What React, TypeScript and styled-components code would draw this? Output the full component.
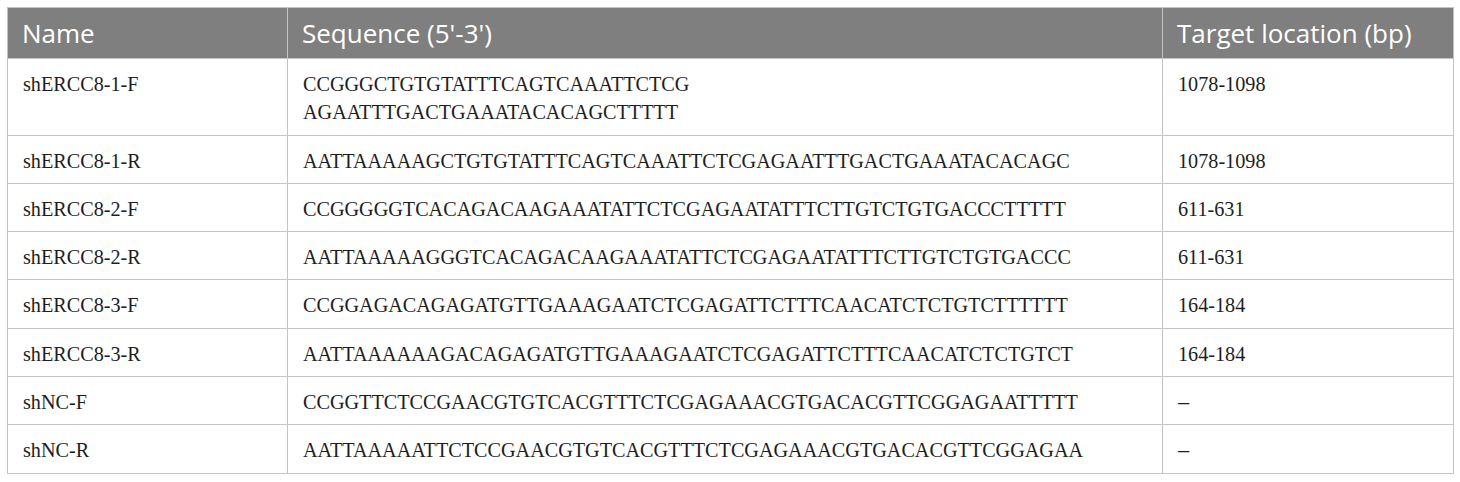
import React from 'react';
import styled, { createGlobalStyle } from 'styled-components';

const GlobalStyle = createGlobalStyle`
  body {
    margin: 0;
    background: #ffffff;
  }
`;

const Page = styled.div`
  padding: 7px 8px 8px 7px;
`;

const Table = styled.table`
  width: 1446px;
  border-collapse: collapse;
  table-layout: fixed;
  border: 1px solid #c4c4c4;
`;

const HeadCell = styled.th<{ $width: number }>`
  box-sizing: border-box;
  width: ${(p) => p.$width}px;
  height: 51px;
  padding: 0 14px;
  background: #7f7f7f;
  color: #ffffff;
  font-family: 'Open Sans', 'Noto Sans', sans-serif;
  font-size: 26px;
  font-weight: 400;
  text-align: left;
  border: 1px solid #c4c4c4;
  border-top: none;
`;

const Cell = styled.td<{ $dash?: boolean }>`
  padding: 11px 14px 8px 15px;
  vertical-align: top;
  color: #1e1e1e;
  font-family: ${(p) => (p.$dash ? "'Liberation Sans', sans-serif" : "'Liberation Serif', serif")};
  font-size: 20.2px;
  line-height: 28.3px;
  border: 1px solid #c4c4c4;
`;

const rows: [string, string[], string][] = [
  ['shERCC8-1-F', ['CCGGGCTGTGTATTTCAGTCAAATTCTCG', 'AGAATTTGACTGAAATACACAGCTTTTT'], '1078-1098'],
  ['shERCC8-1-R', ['AATTAAAAAGCTGTGTATTTCAGTCAAATTCTCGAGAATTTGACTGAAATACACAGC'], '1078-1098'],
  ['shERCC8-2-F', ['CCGGGGGTCACAGACAAGAAATATTCTCGAGAATATTTCTTGTCTGTGACCCTTTTT'], '611-631'],
  ['shERCC8-2-R', ['AATTAAAAAGGGTCACAGACAAGAAATATTCTCGAGAATATTTCTTGTCTGTGACCC'], '611-631'],
  ['shERCC8-3-F', ['CCGGAGACAGAGATGTTGAAAGAATCTCGAGATTCTTTCAACATCTCTGTCTTTTTT'], '164-184'],
  ['shERCC8-3-R', ['AATTAAAAAAGACAGAGATGTTGAAAGAATCTCGAGATTCTTTCAACATCTCTGTCT'], '164-184'],
  ['shNC-F', ['CCGGTTCTCCGAACGTGTCACGTTTCTCGAGAAACGTGACACGTTCGGAGAATTTTT'], '–'],
  ['shNC-R', ['AATTAAAAATTCTCCGAACGTGTCACGTTTCTCGAGAAACGTGACACGTTCGGAGAA'], '–'],
];

const App: React.FC = () => (
  <>
    <GlobalStyle />
    <Page>
      <Table>
        <thead>
          <tr>
            <HeadCell $width={280}>Name</HeadCell>
            <HeadCell $width={875}>Sequence (5'-3')</HeadCell>
            <HeadCell $width={291}>Target location (bp)</HeadCell>
          </tr>
        </thead>
        <tbody>
          {rows.map(([name, seq, loc]) => (
            <tr key={name}>
              <Cell>{name}</Cell>
              <Cell>
                {seq.map((line, i) => (
                  <div key={i}>{line}</div>
                ))}
              </Cell>
              <Cell $dash={loc === '–'}>{loc}</Cell>
            </tr>
          ))}
        </tbody>
      </Table>
    </Page>
  </>
);

export default App;
